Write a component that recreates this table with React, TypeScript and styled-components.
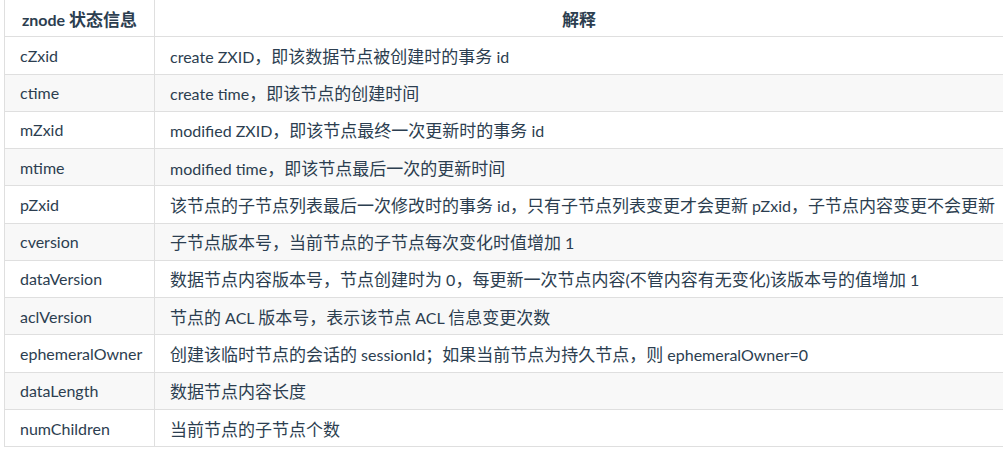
import React from 'react';
import styled, { createGlobalStyle } from 'styled-components';

const GlobalStyle = createGlobalStyle`
  html, body {
    margin: 0;
    padding: 0;
    background: #fff;
  }
  body {
    font-family: Lato, "Noto Sans CJK SC", sans-serif;
    color: #2c3e50;
  }
`;

const Page = styled.div`
  padding-left: 4px;
  margin-top: -1px;
  overflow: hidden;
  height: 451px;
`;

const Table = styled.table`
  width: 1000px;
  border-collapse: collapse;
  table-layout: fixed;
  font-size: 16px;
`;

const HeadCell = styled.th<{ $width?: string }>`
  width: ${({ $width }) => $width || 'auto'};
  height: 37.27px;
  padding: 0 10px;
  border: 1px solid #dfdfdf;
  font-weight: 700;
  text-align: center;
  white-space: nowrap;
  box-sizing: border-box;
`;

const Row = styled.tr<{ $striped?: boolean }>`
  background: ${({ $striped }) => ($striped ? '#f8f8f8' : '#fff')};
`;

const Cell = styled.td`
  height: 37.27px;
  padding: 0 15px;
  border: 1px solid #dfdfdf;
  white-space: nowrap;
  overflow: hidden;
  box-sizing: border-box;
`;

// 한자 부분은 조금 크게
const Han = styled.span`
  font-family: "Noto Sans CJK SC", sans-serif;
  font-size: 17px;
`;

const CJK = /([\u3000-\u303f\u4e00-\u9fff\uff00-\uffef]+)/;

const Mixed: React.FC<{ text: string }> = ({ text }) => (
  <>
    {text.split(CJK).map((part, i) =>
      CJK.test(part) ? <Han key={i}>{part}</Han> : part
    )}
  </>
);

const rows: [string, string][] = [
  ['cZxid', 'create ZXID，即该数据节点被创建时的事务 id'],
  ['ctime', 'create time，即该节点的创建时间'],
  ['mZxid', 'modified ZXID，即该节点最终一次更新时的事务 id'],
  ['mtime', 'modified time，即该节点最后一次的更新时间'],
  ['pZxid', '该节点的子节点列表最后一次修改时的事务 id，只有子节点列表变更才会更新 pZxid，子节点内容变更不会更新'],
  ['cversion', '子节点版本号，当前节点的子节点每次变化时值增加 1'],
  ['dataVersion', '数据节点内容版本号，节点创建时为 0，每更新一次节点内容(不管内容有无变化)该版本号的值增加 1'],
  ['aclVersion', '节点的 ACL 版本号，表示该节点 ACL 信息变更次数'],
  ['ephemeralOwner', '创建该临时节点的会话的 sessionId；如果当前节点为持久节点，则 ephemeralOwner=0'],
  ['dataLength', '数据节点内容长度'],
  ['numChildren', '当前节点的子节点个数'],
];

export default function App() {
  return (
    <>
      <GlobalStyle />
      <Page>
        <Table>
          <thead>
            <tr>
              <HeadCell $width="150px"><Mixed text="znode 状态信息" /></HeadCell>
              <HeadCell><Mixed text="解释" /></HeadCell>
            </tr>
          </thead>
          <tbody>
            {rows.map(([key, desc], i) => (
              <Row key={key} $striped={i % 2 === 1}>
                <Cell>{key}</Cell>
                <Cell><Mixed text={desc} /></Cell>
              </Row>
            ))}
          </tbody>
        </Table>
      </Page>
    </>
  );
}
